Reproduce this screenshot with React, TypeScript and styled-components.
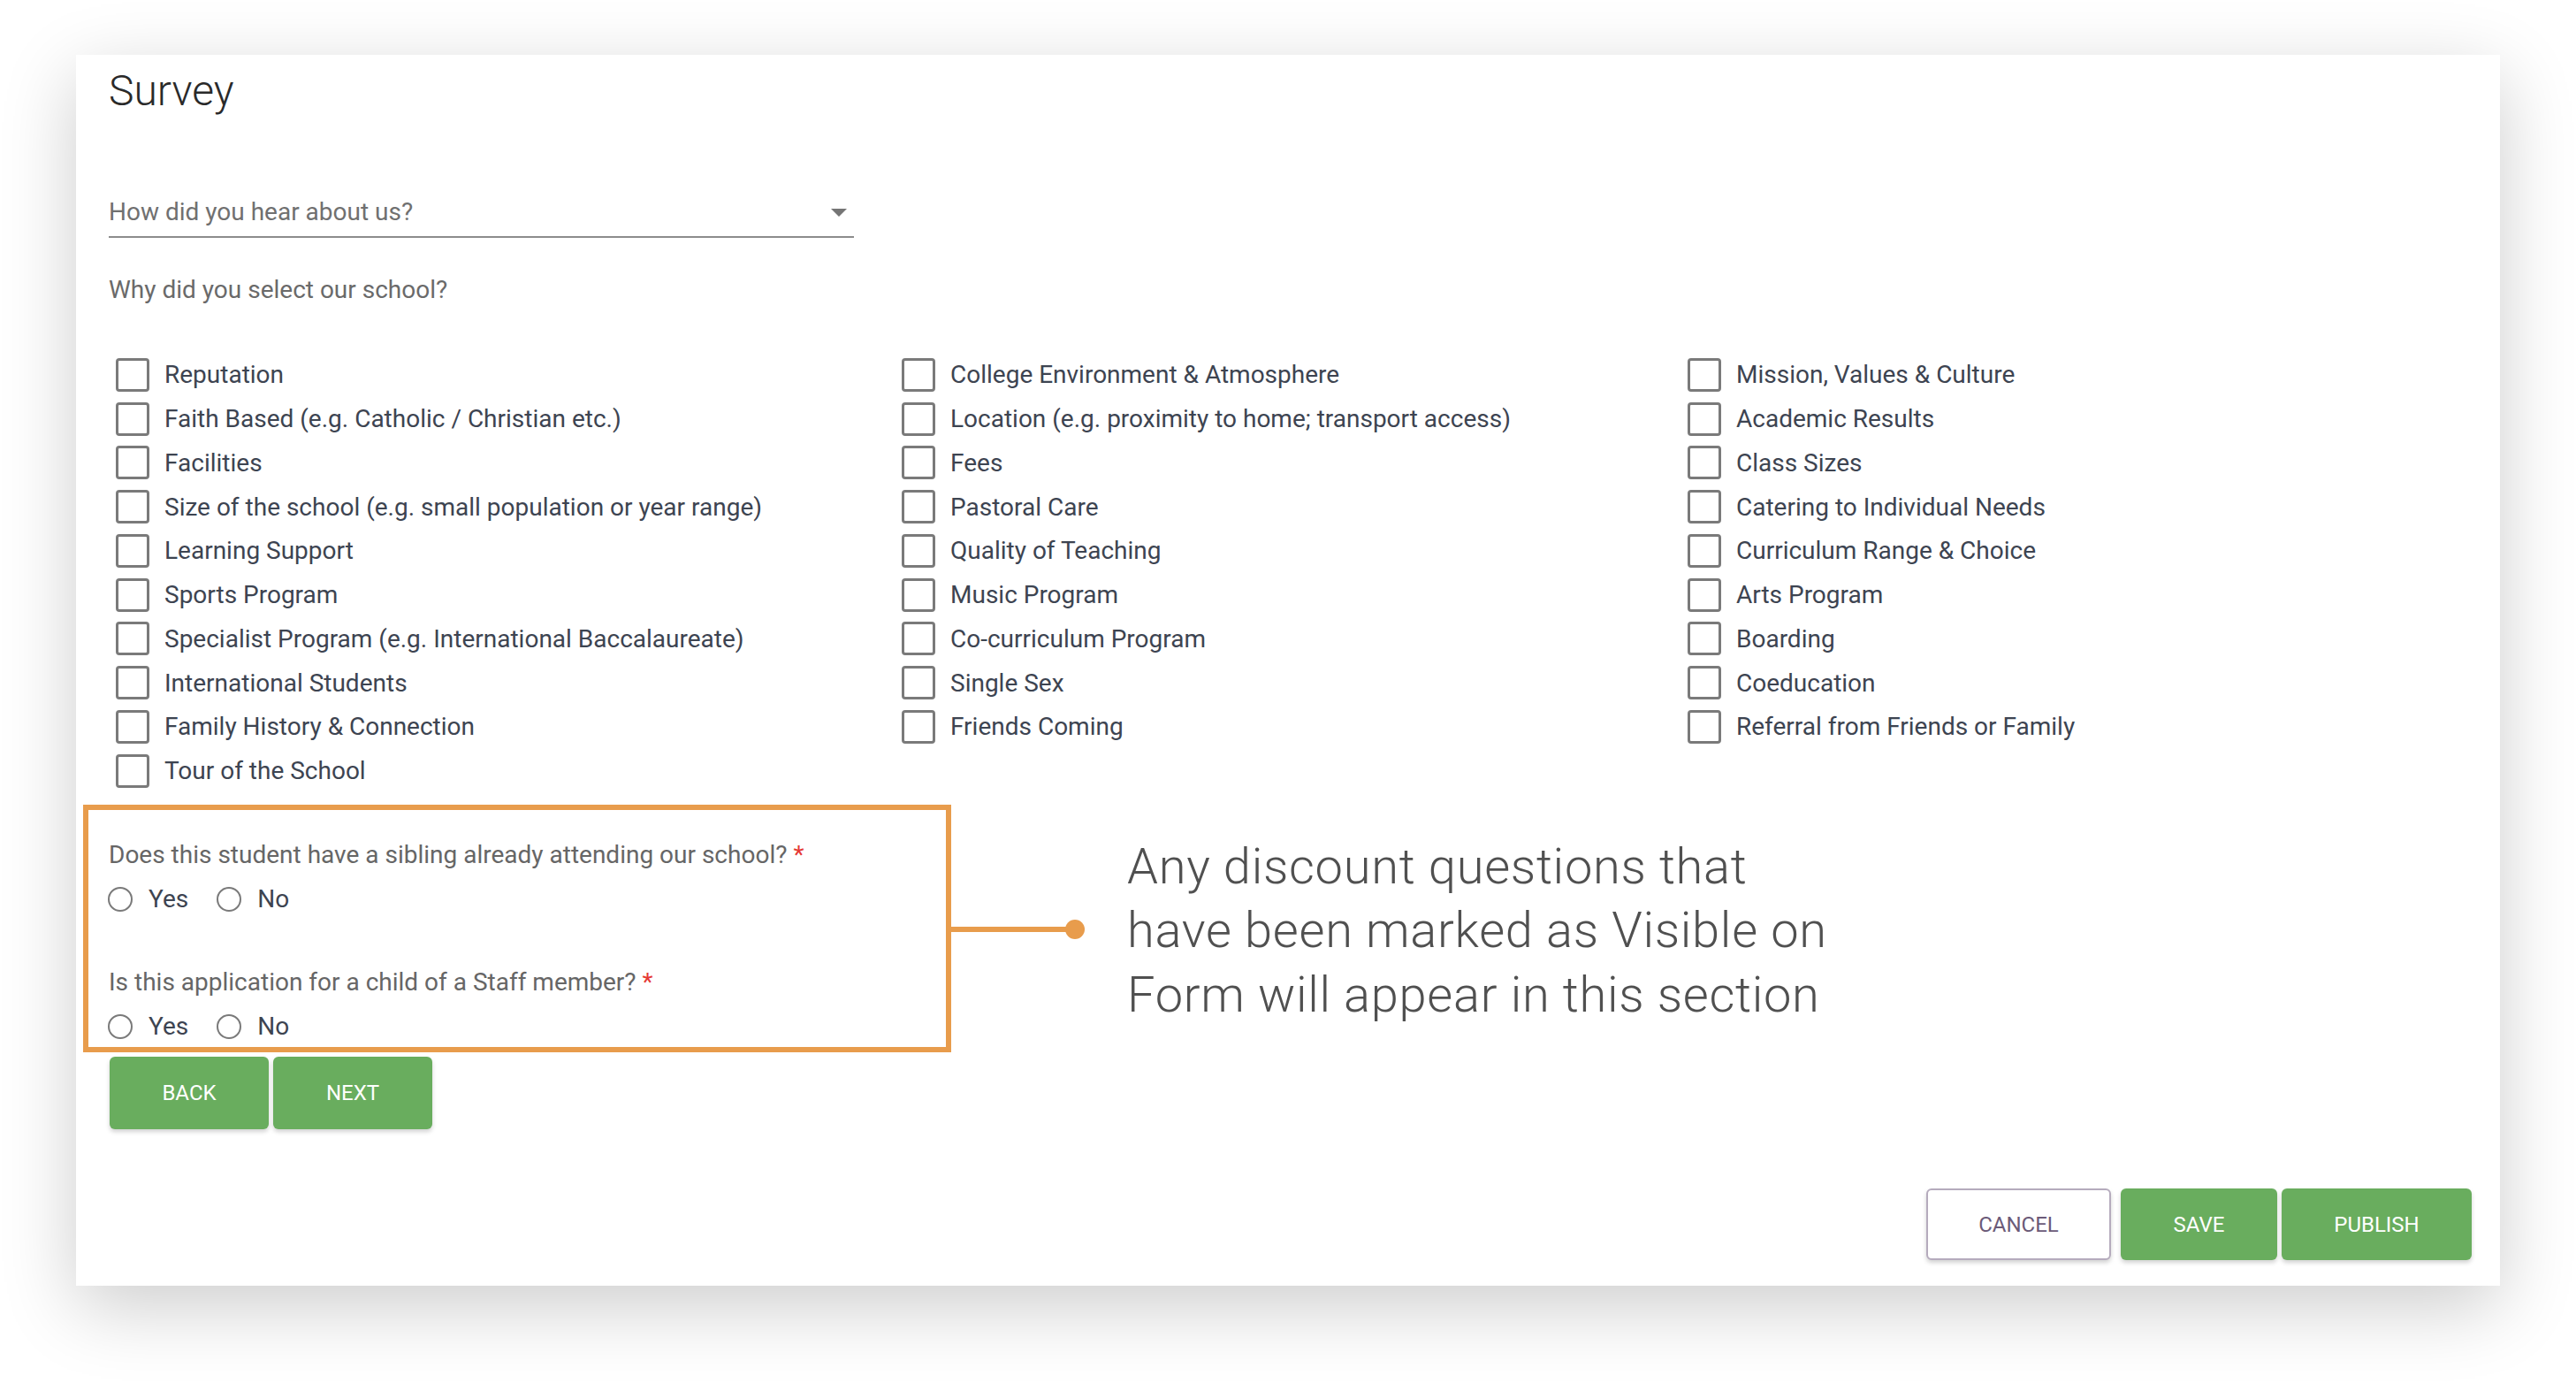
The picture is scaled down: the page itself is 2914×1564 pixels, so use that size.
import styled, { createGlobalStyle } from "styled-components";

const columns: string[][] = [
  [
    "Reputation",
    "Faith Based (e.g. Catholic / Christian etc.)",
    "Facilities",
    "Size of the school (e.g. small population or year range)",
    "Learning Support",
    "Sports Program",
    "Specialist Program (e.g. International Baccalaureate)",
    "International Students",
    "Family History & Connection",
    "Tour of the School",
  ],
  [
    "College Environment & Atmosphere",
    "Location (e.g. proximity to home; transport access)",
    "Fees",
    "Pastoral Care",
    "Quality of Teaching",
    "Music Program",
    "Co-curriculum Program",
    "Single Sex",
    "Friends Coming",
  ],
  [
    "Mission, Values & Culture",
    "Academic Results",
    "Class Sizes",
    "Catering to Individual Needs",
    "Curriculum Range & Choice",
    "Arts Program",
    "Boarding",
    "Coeducation",
    "Referral from Friends or Family",
  ],
];

const discountQuestions = [
  "Does this student have a sibling already attending our school?",
  "Is this application for a child of a Staff member?",
];

const App = () => {
  return (
    <Page>
      <GlobalStyle />
      <Card>
        <Title>Survey</Title>

        <Select>
          <SelectText>How did you hear about us?</SelectText>
          <svg width="18" height="9" viewBox="0 0 18 9">
            <polygon points="0,0 18,0 9,9" fill="#757575" />
          </svg>
        </Select>

        <FieldLabel>Why did you select our school?</FieldLabel>

        <CheckGrid>
          {columns.map((col, i) => (
            <CheckColumn key={i}>
              {col.map((label) => (
                <CheckRow key={label}>
                  <CheckBox />
                  <CheckText>{label}</CheckText>
                </CheckRow>
              ))}
            </CheckColumn>
          ))}
        </CheckGrid>

        <DiscountRow>
          <Highlight>
            {discountQuestions.map((q, i) => (
              <QuestionGroup key={q} first={i === 0}>
                <Question>
                  {q} <Required>*</Required>
                </Question>
                <RadioRow>
                  <RadioOption>
                    <RadioCircle />
                    <RadioText>Yes</RadioText>
                  </RadioOption>
                  <RadioOption>
                    <RadioCircle />
                    <RadioText>No</RadioText>
                  </RadioOption>
                </RadioRow>
              </QuestionGroup>
            ))}
          </Highlight>
          <Connector>
            <ConnectorLine />
            <ConnectorDot />
          </Connector>
          <Note>
            Any discount questions that
            <br />
            have been marked as Visible on
            <br />
            Form will appear in this section
          </Note>
        </DiscountRow>

        <NavRow>
          <Button width={180}>BACK</Button>
          <Button width={180}>NEXT</Button>
        </NavRow>

        <Footer>
          <Button outlined width={209}>
            CANCEL
          </Button>
          <Button width={177}>SAVE</Button>
          <Button width={215}>PUBLISH</Button>
        </Footer>
      </Card>
    </Page>
  );
};

export default App;

const GlobalStyle = createGlobalStyle`
  html, body {
    margin: 0;
    padding: 0;
    background: #ffffff;
  }
  body {
    font-family: Roboto, "Liberation Sans", Arial, sans-serif;
  }
  * {
    box-sizing: border-box;
  }
`;

const Page = styled.div`
  width: 2914px;
  height: 1564px;
  padding: 62px 86px 0;
  background: #ffffff;
`;

const Card = styled.div`
  height: 1392px;
  background: #ffffff;
  box-shadow: 0 24px 80px rgba(0, 0, 0, 0.2);
  padding: 13px 32px 29px 37px;
  display: flex;
  flex-direction: column;
`;

const Title = styled.h1`
  margin: 0;
  font-size: 48px;
  line-height: 56px;
  font-weight: 300;
  color: #2a2a2a;
`;

const Select = styled.div`
  margin-top: 90px;
  width: 843px;
  height: 48px;
  padding: 0 8px 8px 0;
  display: flex;
  align-items: center;
  justify-content: space-between;
  border-bottom: 2px solid #8c8c8c;
`;

const SelectText = styled.span`
  font-size: 28px;
  line-height: 40px;
  color: #707070;
`;

const FieldLabel = styled.div`
  margin-top: 39px;
  font-size: 28px;
  line-height: 40px;
  color: #6a6a6a;
`;

const CheckGrid = styled.div`
  margin-top: 51px;
  width: 2667px;
  display: grid;
  grid-template-columns: repeat(3, 1fr);
`;

const CheckColumn = styled.div`
  display: flex;
  flex-direction: column;
`;

const CheckRow = styled.div`
  height: 49.75px;
  display: flex;
  align-items: center;
  padding-left: 8px;
`;

const CheckBox = styled.span`
  width: 38px;
  height: 38px;
  border: 3px solid #7a7a7a;
  border-radius: 4px;
  flex-shrink: 0;
`;

const CheckText = styled.span`
  margin-left: 17px;
  font-size: 28px;
  line-height: 49px;
  color: #3d4451;
  white-space: nowrap;
`;

const DiscountRow = styled.div`
  margin-top: 13px;
  display: flex;
  align-items: center;
`;

const Highlight = styled.div`
  margin-left: -29px;
  width: 982px;
  border: 6px solid #e89c4c;
  padding: 31px 23px 3px;
  flex-shrink: 0;
`;

const QuestionGroup = styled.div<{ first?: boolean }>`
  margin-top: ${(p) => (p.first ? "0" : "54px")};
`;

const Question = styled.div`
  font-size: 28px;
  line-height: 40px;
  color: #666666;
  margin-bottom: 10px;
`;

const Required = styled.span`
  color: #e53935;
`;

const RadioRow = styled.div`
  height: 40px;
  display: flex;
  align-items: center;
  gap: 32px;
  margin-left: -1px;
`;

const RadioOption = styled.label`
  display: flex;
  align-items: center;
  gap: 18px;
`;

const RadioCircle = styled.span`
  width: 28px;
  height: 28px;
  border-radius: 50%;
  border: 2px solid #7a7a7a;
`;

const RadioText = styled.span`
  font-size: 28px;
  line-height: 40px;
  color: #3d4451;
`;

const Connector = styled.div`
  display: flex;
  align-items: center;
  margin-top: 3px;
`;

const ConnectorLine = styled.div`
  width: 134px;
  height: 6px;
  background: #e89c4c;
`;

const ConnectorDot = styled.div`
  width: 22px;
  height: 22px;
  border-radius: 50%;
  background: #e89c4c;
  margin-left: -5px;
`;

const Note = styled.p`
  margin: 6px 0 0 48px;
  font-family: Roboto, "Liberation Sans", Arial, sans-serif;
  font-weight: 300;
  font-size: 56px;
  line-height: 72.5px;
  letter-spacing: 0.7px;
  color: #505050;
  white-space: nowrap;
`;

const NavRow = styled.div`
  margin-top: 5px;
  margin-left: 1px;
  display: flex;
  gap: 5px;
`;

const Button = styled.button<{ outlined?: boolean; width: number }>`
  width: ${(p) => p.width}px;
  height: 82px;
  padding: 0;
  border-radius: 6px;
  font-family: Roboto, "Liberation Sans", Arial, sans-serif;
  font-size: 24px;
  font-weight: 400;
  letter-spacing: 0;
  cursor: pointer;
  border: ${(p) => (p.outlined ? "2px solid #b5abbd" : "none")};
  background: ${(p) => (p.outlined ? "#ffffff" : "#69ad5e")};
  color: ${(p) => (p.outlined ? "#6b5a78" : "#ffffff")};
  box-shadow: 0 3px 5px rgba(0, 0, 0, 0.18);
`;

const Footer = styled.div`
  margin-top: auto;
  display: flex;
  justify-content: flex-end;
  gap: 5px;

  & > button {
    height: 81px;
  }

  & > button:first-child {
    margin-right: 6px;
  }
`;
